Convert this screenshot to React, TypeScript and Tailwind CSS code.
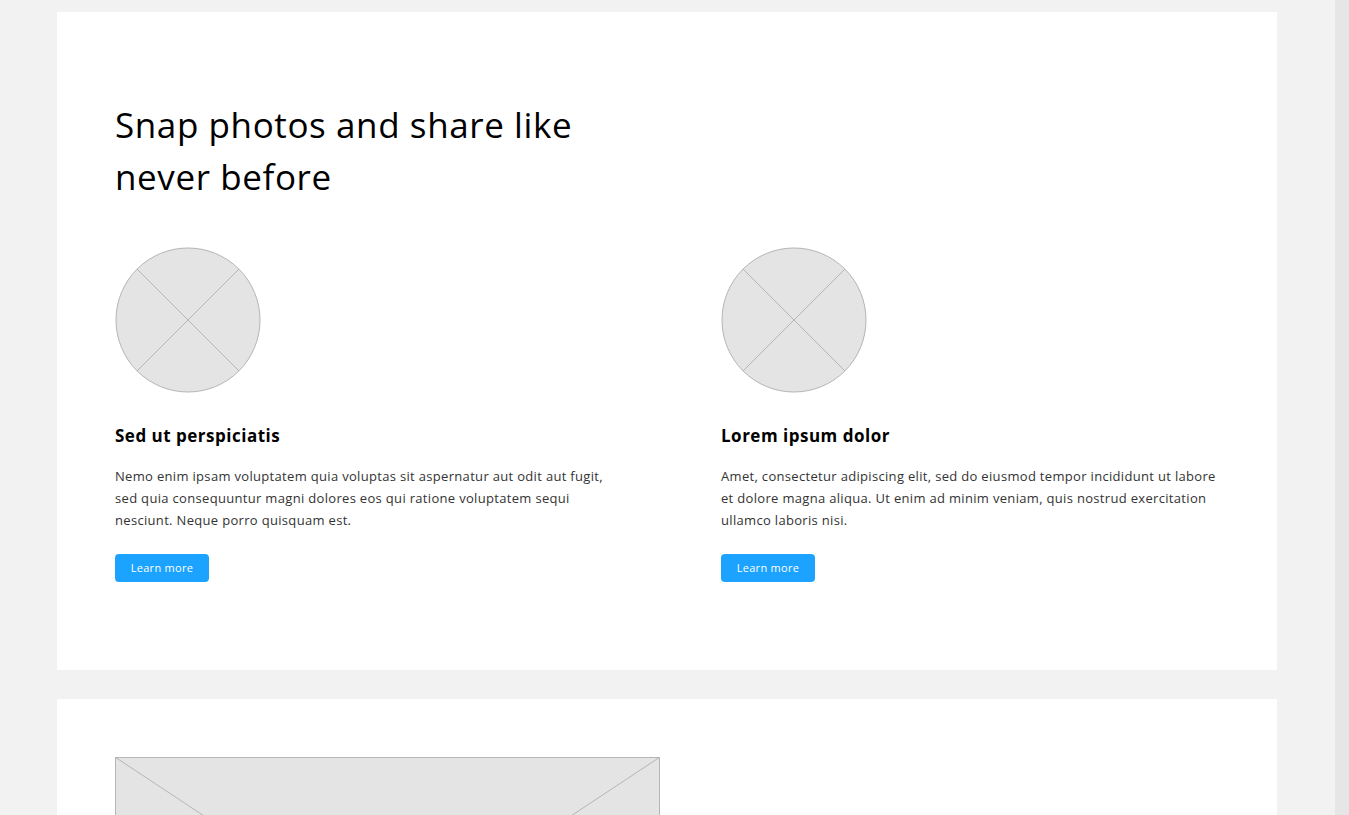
import React from 'react'

const features = [
    {
        title: 'Sed ut perspiciatis',
        text: 'Nemo enim ipsam voluptatem quia voluptas sit aspernatur aut odit aut fugit, sed quia consequuntur magni dolores eos qui ratione voluptatem sequi nesciunt. Neque porro quisquam est.',
    },
    {
        title: 'Lorem ipsum dolor',
        text: 'Amet, consectetur adipiscing elit, sed do eiusmod tempor incididunt ut labore et dolore magna aliqua. Ut enim ad minim veniam, quis nostrud exercitation ullamco laboris nisi.',
    },
]

function CirclePlaceholder() {
    return (
        <svg width="146" height="146" viewBox="0 0 146 146" className="block">
            <circle cx="73" cy="73" r="72" fill="#e4e4e4" stroke="#b5b5b5" strokeWidth="1" />
            <line x1="22" y1="22" x2="124" y2="124" stroke="#b5b5b5" strokeWidth="1" />
            <line x1="124" y1="22" x2="22" y2="124" stroke="#b5b5b5" strokeWidth="1" />
        </svg>
    )
}

function App() {
    return (
        <div className="flex h-[815px] overflow-hidden bg-[#f2f2f2]" style={{ fontFamily: '"Open Sans", "Liberation Sans", sans-serif' }}>
            <main className="flex-1 flex flex-col gap-[29px] pt-3 pl-[57px]">
                <section className="w-[1220px] bg-white px-[58px] pt-[87px] pb-[88px]">
                    <h1 className="w-[540px] text-[35px] leading-[52px] font-normal text-black tracking-[0.6px]">
                        Snap photos and share like never before
                    </h1>
                    <div className="grid grid-cols-[498px_1fr] gap-x-[108px] mt-[44px] -mr-[4px]">
                        {features.map((f) => (
                            <div key={f.title} className="flex flex-col items-start">
                                <CirclePlaceholder />
                                <h2 className="mt-[31px] text-[17px] font-bold text-black leading-6 tracking-[0.5px]">{f.title}</h2>
                                <p className="mt-[17px] text-[13px] leading-[22px] text-[#333333] tracking-[0.32px]">{f.text}</p>
                                <button className="mt-[23px] h-[28px] w-[94px] rounded bg-[#1ba3ff] text-[11px] text-white tracking-[0.3px]">
                                    Learn more
                                </button>
                            </div>
                        ))}
                    </div>
                </section>
                <section className="w-[1220px] bg-white px-[58px] pt-[58px] h-[400px]">
                    <svg width="545" height="300" viewBox="0 0 545 300" className="block">
                        <rect x="0.5" y="0.5" width="544" height="299" fill="#e4e4e4" stroke="#b5b5b5" />
                        <line x1="0" y1="0" x2="272" y2="180" stroke="#b5b5b5" />
                        <line x1="545" y1="0" x2="273" y2="180" stroke="#b5b5b5" />
                    </svg>
                </section>
            </main>
            <div className="w-[14px] bg-[#e6e6e6]" />
        </div>
    )
}

export default App
